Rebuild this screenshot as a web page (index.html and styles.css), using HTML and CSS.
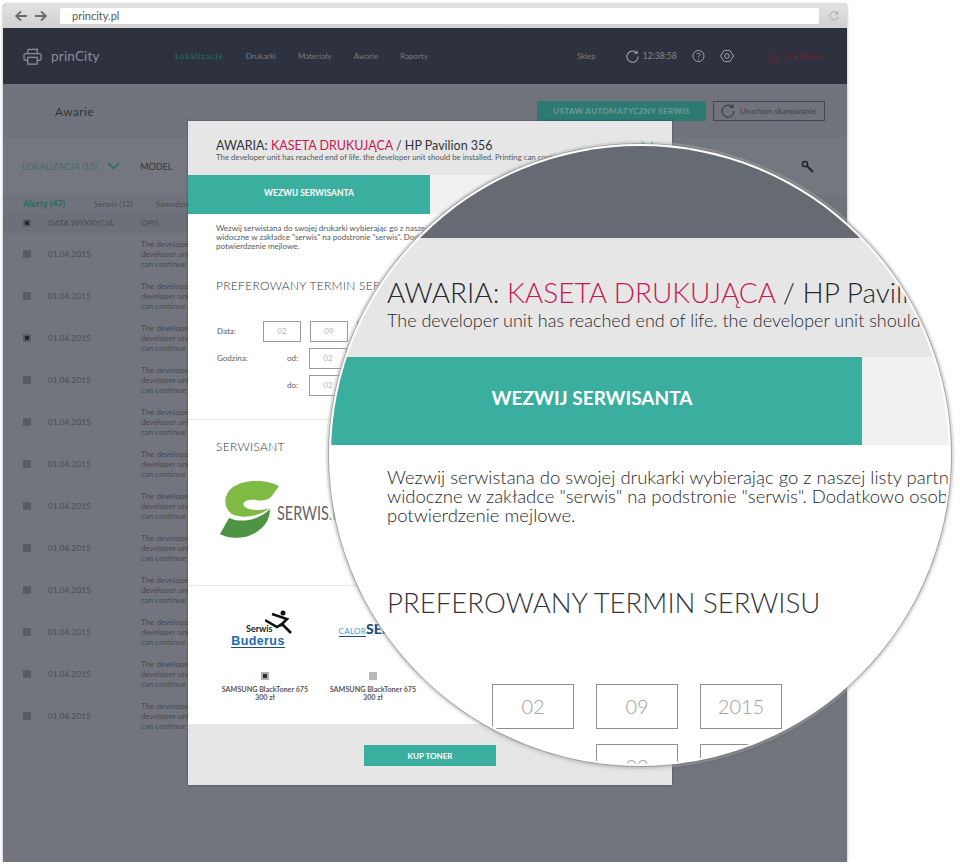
FILE: index.html
```html
<!DOCTYPE html>
<html lang="pl">
<head>
    <meta charset="UTF-8">
    <title>princity.pl</title>
    <link rel="stylesheet" href="styles.css">
</head>
<body>

    <div class="window">
        <div class="toolbar">
            <svg class="arrows" width="32" height="12" viewBox="0 0 32 12"><path d="M1 6h11M6 1.500L1 6l5 4.500M20 6h11M26 1.500L31 6l-5 4.500" fill="none" stroke="#6b6b6b" stroke-width="1.800"/></svg>
            <div class="address">princity.pl</div>
            <svg class="reload" width="12" height="12" viewBox="0 0 12 12"><path d="M9.500 3.500A4.200 4.200 0 1 0 10 7M9.800 1v3H7" fill="none" stroke="#aaa" stroke-width="1"/></svg>
        </div>

        <div class="navbar">
            <div class="brand">
                <svg width="19" height="19" viewBox="0 0 20 20" fill="none" stroke="#8b8e96" stroke-width="1.300"><path d="M5 7V3l2-1 2 1 2-1 2 1 2-1v5M5 14H3a2 2 0 0 1-2-2V9a2 2 0 0 1 2-2h14a2 2 0 0 1 2 2v3a2 2 0 0 1-2 2h-2M5 11h10v7H5z"/></svg>
                <span>prinCity</span>
            </div>
            <div class="menu">
                <span class="menu-active">Lokalizacje</span>
                <span>Drukarki</span>
                <span>Materiały</span>
                <span>Awarie</span>
                <span>Raporty</span>
            </div>
            <div class="nav-right">
                <span class="shop">Sklep</span>
                <svg width="13" height="13" viewBox="0 0 14 14" fill="none" stroke="#a5a8ae" stroke-width="1.100"><path d="M11.500 3.200A6 6 0 1 0 13 7M12 .5v3H9"/></svg>
                <span class="clock">12:38:58</span>
                <svg class="help" width="13" height="14" viewBox="0 0 14 14" fill="none" stroke="#a5a8ae" stroke-width="1"><circle cx="7" cy="7" r="6"/><path d="M5.200 5.200C5.500 3.400 8.800 3.500 8.800 5.300 8.800 6.800 7 6.800 7 8.500M7 10v1"/></svg>
                <svg class="gear" width="14" height="14" viewBox="0 0 15 14" fill="none" stroke="#a5a8ae" stroke-width="1"><path d="M4.500 1h6l4 6-4 6h-6l-4-6z"/><circle cx="7.500" cy="7" r="2.500"/></svg>
                <svg class="warn" width="14" height="13" viewBox="0 0 14 13" fill="none" stroke="#6f2235" stroke-width="1"><path d="M7 1l6 11H1z"/></svg>
                <span class="alerts">23 Alerty</span>
            </div>
        </div>

        <div class="subheader">
            <h2>Awarie</h2>
            <button class="btn-auto">USTAW AUTOMATYCZNY SERWIS</button>
            <button class="btn-scan">
                <svg width="14" height="14" viewBox="0 0 14 14" fill="none" stroke="#34373f" stroke-width="1.100"><path d="M11.500 3.200A6 6 0 1 0 13 7M12 .5v3H9"/></svg>
                Uruchom skanowanie
            </button>
        </div>

        <div class="filters">
            <span class="filter-active">LOKALIZACJA (15)</span>
            <svg width="13" height="8" viewBox="0 0 13 8"><path d="M1 1l5.500 5.500L12 1" fill="none" stroke="#1d6d62" stroke-width="1.500"/></svg>
            <span class="filter-model">MODEL</span>
            <svg class="search" width="13" height="13" viewBox="0 0 13 13" fill="none" stroke="#24262c"><circle cx="4" cy="4" r="2.600" stroke-width="1.500"/><path d="M6 6l6 6" stroke-width="2"/></svg>
        </div>

        <div class="tabs">
            <span class="tab-active">Alerty (47)</span>
            <span>Serwis (12)</span>
            <span>Samodzielne</span>
        </div>

        <div class="table-head">
            <i class="check checked"></i>
            <span class="col-date">DATA WYKRYCIA</span>
            <span>OPIS</span>
        </div>

        <div class="row"><i class="check"></i><span class="col-date">01.04.2015</span><p>The developer unit has reached<br>developer unit should be<br>can continue</p><b class="row-mark"></b></div>
        <div class="row"><i class="check"></i><span class="col-date">01.04.2015</span><p>The developer unit has reached<br>developer unit should be<br>can continue</p><b class="row-mark"></b></div>
        <div class="row"><i class="check checked"></i><span class="col-date">01.04.2015</span><p>The developer unit has reached<br>developer unit should be<br>can continue</p><b class="row-mark"></b></div>
        <div class="row"><i class="check"></i><span class="col-date">01.04.2015</span><p>The developer unit has reached<br>developer unit should be<br>can continue</p><b class="row-mark"></b></div>
        <div class="row"><i class="check"></i><span class="col-date">01.04.2015</span><p>The developer unit has reached<br>developer unit should be<br>can continue</p><b class="row-mark"></b></div>
        <div class="row"><i class="check"></i><span class="col-date">01.04.2015</span><p>The developer unit has reached<br>developer unit should be<br>can continue</p><b class="row-mark"></b></div>
        <div class="row"><i class="check"></i><span class="col-date">01.04.2015</span><p>The developer unit has reached<br>developer unit should be<br>can continue</p><b class="row-mark"></b></div>
        <div class="row"><i class="check"></i><span class="col-date">01.04.2015</span><p>The developer unit has reached<br>developer unit should be<br>can continue</p><b class="row-mark"></b></div>
        <div class="row"><i class="check"></i><span class="col-date">01.04.2015</span><p>The developer unit has reached<br>developer unit should be<br>can continue</p><b class="row-mark"></b></div>
        <div class="row"><i class="check"></i><span class="col-date">01.04.2015</span><p>The developer unit has reached<br>developer unit should be<br>can continue</p><b class="row-mark"></b></div>
        <div class="row"><i class="check"></i><span class="col-date">01.04.2015</span><p>The developer unit has reached<br>developer unit should be<br>can continue</p><b class="row-mark"></b></div>
        <div class="row"><i class="check"></i><span class="col-date">01.04.2015</span><p>The developer unit has reached<br>developer unit should be<br>can continue</p><b class="row-mark"></b></div>
    </div>

    <!-- popup over the dimmed page -->
    <div class="modal">
        <div class="modal-head">
            <h3>AWARIA: <em>KASETA DRUKUJĄCA</em> / HP Pavilion 356</h3>
            <p>The developer unit has reached end of life. the developer unit should be installed. Printing can continue</p>
            <svg class="modal-chevron" width="13" height="8" viewBox="0 0 13 8"><path d="M1 1l5.500 5.500L12 1" fill="none" stroke="#38ae9e" stroke-width="1.200"/></svg>
        </div>
        <div class="modal-tabs"><div class="modal-tab">WEZWIJ SERWISANTA</div></div>
        <p class="modal-text">Wezwij serwistana do swojej drukarki wybierając go z naszej listy partnerów<br>widoczne w zakładce "serwis" na podstronie "serwis". Dodatkowo osoba<br>potwierdzenie mejlowe.</p>
        <h4 class="modal-title">PREFEROWANY TERMIN SERWISU</h4>
        <div class="form">
            <div class="form-row"><label class="lbl">Data:</label><span class="lbl-sub"></span><span class="field">02</span><span class="field">09</span><span class="field">2015</span></div>
            <div class="form-row"><label class="lbl">Godzina:</label><span class="lbl-sub">od:</span><span class="field">02</span><span class="field">00</span></div>
            <div class="form-row"><label class="lbl"></label><span class="lbl-sub">do:</span><span class="field">02</span><span class="field">00</span></div>
        </div>
        <div class="section">
            <h4 class="modal-title">SERWISANT</h4>
            <div class="serwis-logo">
                <svg width="60" height="58" viewBox="0 0 60 58"><path d="M59 5C45-2 25-2 13 6 3 13 3 27 12 33c10 5 26 3 38-6-8 3-22 3-26-2-3-5 6-7 12-6 6 1 11 1 16-4z" fill="#7fba45"/><path d="M50 28c0 14-10 24-25 28-10 2-20 0-25-3l9-16c11 5 29 3 41-9z" fill="#4f9443"/></svg>
                <span>SERWIS<em>.PL</em></span>
            </div>
        </div>
        <div class="section parts">
            <div class="part">
                <div class="buderus">
                    <div class="buderus-top">
                        <span>Serwis</span>
                        <svg width="27" height="24" viewBox="0 0 27 24"><circle cx="18" cy="3" r="2.500" fill="#111"/><path d="M7 4l15 5-7 7M0 10l12 7 5-3 9 9" fill="none" stroke="#111" stroke-width="2.600"/></svg>
                    </div>
                    <div class="buderus-name">Buderus</div>
                </div>
                <i class="check-part checked"></i>
                <div class="part-name">SAMSUNG BlackToner 675<br>300 zł</div>
            </div>
            <div class="part">
                <div class="calor"><small>CALOR</small>SERWIS</div>
                <i class="check-part"></i>
                <div class="part-name">SAMSUNG BlackToner 675<br>300 zł</div>
            </div>
            <div class="part">
                <div class="calor"></div>
                <i class="check-part"></i>
                <div class="part-name">SAMSUNG BlackToner 675<br>300 zł</div>
            </div>
        </div>
        <div class="modal-foot"><button class="btn-buy">KUP TONER</button></div>
    </div>

    <!-- magnifying glass -->
    <div class="lens">
        <div class="lens-top"></div>
        <div class="lens-head">
            <h3>AWARIA: <em>KASETA DRUKUJĄCA</em> / HP Pavilion 356</h3>
            <p>The developer unit has reached end of life. the developer unit should be installed</p>
        </div>
        <div class="lens-tabs"><div class="lens-tab">WEZWIJ SERWISANTA</div></div>
        <p class="lens-text">Wezwij serwistana do swojej drukarki wybierając go z naszej listy partnerów<br>widoczne w zakładce "serwis" na podstronie "serwis". Dodatkowo osoba<br>potwierdzenie mejlowe.</p>
        <h4 class="lens-title">PREFEROWANY TERMIN SERWISU</h4>
        <div class="lens-row"><span class="lens-field">02</span><span class="lens-field">09</span><span class="lens-field">2015</span></div>
        <div class="lens-row lens-row-second"><span class="lens-field lens-field-empty"></span><span class="lens-field">02</span><span class="lens-field">00</span></div>
    </div>

</body>
</html>
```

FILE: styles.css
```css
body {
    margin: 0;
    background-color: #fff;
    font-family: Lato, "Open Sans", sans-serif;
    color: #3a3c42;
}

h2, h3, h4, p {
    margin: 0;
    font-weight: 400;
}

em {
    font-style: normal;
}

button {
    font-family: inherit;
    border: none;
    padding: 0;
}

/* browser window */
.window {
    width: 844px;
    height: 858px;
    margin: 4px 0 0 3px;
    overflow: hidden;
    background-color: #72757d;
    border-radius: 4px 4px 0 0;
    box-shadow: 0 0 3px rgba(0, 0, 0, 0.35);
}

.toolbar {
    height: 24px;
    display: flex;
    align-items: center;
    background: linear-gradient(#e2e2e2, #d0d0d0);
    padding: 0 7px 0 12px;
    box-sizing: border-box;
}

.address {
    flex: 1;
    height: 16px;
    line-height: 15px;
    margin: 0 9px 0 13px;
    padding-left: 12px;
    background-color: #fff;
    font-size: 11px;
    color: #555;
    border-radius: 2px;
}

.navbar {
    height: 56px;
    display: flex;
    align-items: center;
    background-color: #2e323e;
    color: #777a82;
    padding: 0 22px 0 20px;
    font-size: 8px;
}

.brand {
    width: 152px;
    display: flex;
    align-items: center;
    gap: 9px;
    font-size: 13.500px;
    letter-spacing: 0.2px;
    color: #8b8e96;
}

.menu {
    display: flex;
    gap: 22px;
}

.menu-active {
    color: #1c6b61;
    font-weight: 700;
    letter-spacing: 0.9px;
}

.nav-right {
    margin-left: auto;
    display: flex;
    align-items: center;
}

.shop {
    margin-right: 30px;
}

.clock {
    margin-left: 4px;
    font-size: 8.500px;
    color: #85888f;
}

.help {
    margin-left: 15px;
}

.gear {
    margin-left: 15px;
}

.warn {
    margin-left: 33px;
}

.alerts {
    margin-left: 6px;
    font-weight: 700;
    letter-spacing: 0.6px;
    color: #6f2235;
}

.subheader {
    height: 54px;
    display: flex;
    align-items: center;
    padding: 0 22px 0 52px;
    background-color: #70737b;
    box-sizing: border-box;
}

.subheader h2 {
    font-size: 12px;
    letter-spacing: 0.4px;
    color: #33353b;
    margin-right: auto;
}

.btn-auto {
    width: 169px;
    height: 20px;
    margin-right: 7px;
    background-color: #2c7a72;
    color: #6f9a96;
    font-size: 8px;
    font-weight: 700;
    letter-spacing: 0.4px;
}

.btn-scan {
    width: 112px;
    height: 20px;
    box-sizing: border-box;
    display: flex;
    align-items: center;
    gap: 5px;
    padding-left: 7px;
    background: none;
    border: 1px solid #43464d;
    color: #3e4148;
    font-size: 8px;
}

.filters {
    height: 56px;
    display: flex;
    align-items: center;
    padding: 0 33px 0 19px;
    background-color: #74777f;
    box-sizing: border-box;
    font-size: 9px;
}

.filter-active {
    color: #3f6d69;
    margin-right: 10px;
}

.filter-model {
    margin-left: 20px;
    color: #34363c;
}

.search {
    margin-left: auto;
}

.tabs {
    height: 19px;
    display: flex;
    align-items: center;
    gap: 23px;
    padding-left: 20px;
    background-color: #70737b;
    font-size: 8px;
    color: #494c53;
}

.tab-active {
    margin-right: 6px;
    color: #1d6d62;
    font-size: 9px;
    font-weight: 700;
}

.table-head, .row {
    display: flex;
    align-items: center;
    padding-left: 20px;
    font-size: 8px;
    color: #474a51;
}

.table-head {
    height: 20px;
    background-color: #6d7078;
}

.row {
    height: 42px;
}

.row p {
    line-height: 10px;
    font-size: 8px;
}

.col-date {
    width: 93px;
    letter-spacing: 0.2px;
}

.check {
    width: 8px;
    height: 8px;
    margin-right: 17px;
    background-color: #595c63;
}

.check.checked {
    box-shadow: inset 0 0 0 2px #595c63, inset 0 0 0 4px #24262c;
}

.row-mark {
    width: 5px;
    height: 3px;
    margin: 0 41px 0 auto;
    border: solid #76304a;
    border-width: 0 0 1px 1px;
    border-radius: 0 0 3px 3px;
}

/* popup */
.modal {
    position: absolute;
    left: 188px;
    top: 121px;
    width: 484px;
    height: 664px;
    display: flex;
    flex-direction: column;
    background-color: #fff;
    box-shadow: 0 0 2px rgba(0, 0, 0, 0.4);
    overflow: hidden;
}

.modal-head {
    height: 54px;
    box-sizing: border-box;
    padding: 17px 0 0 28px;
    background-color: #e6e6e6;
    position: relative;
    white-space: nowrap;
}

.modal-head h3 {
    font-size: 12.500px;
    line-height: 15px;
    color: #33353a;
}

.modal-head h3 em, .lens-head h3 em {
    color: #c8184f;
}

.modal-head p {
    font-size: 7.800px;
    line-height: 9px;
    color: #55575c;
}

.modal-chevron {
    position: absolute;
    right: 18px;
    top: 20px;
}

.modal-tabs {
    height: 39px;
    background-color: #f1f1f1;
}

.modal-tab {
    width: 242px;
    height: 39px;
    line-height: 37px;
    text-align: center;
    background-color: #3aaf9f;
    color: #fff;
    font-size: 8.500px;
    font-weight: 700;
}

.modal-text {
    margin: 10px 0 0 28px;
    font-size: 8px;
    line-height: 9.200px;
    color: #55575c;
    white-space: nowrap;
}

.modal-title {
    font-size: 12px;
    line-height: 14px;
    font-weight: 300;
    color: #33353a;
    letter-spacing: 0.3px;
    white-space: nowrap;
}

.modal-text + .modal-title {
    margin: 27px 0 0 28px;
}

.form {
    margin: 28px 0 0 29px;
    display: flex;
    flex-direction: column;
    gap: 6px;
}

.form-row {
    display: flex;
    align-items: center;
    gap: 9px;
    font-size: 8px;
    color: #5a5c61;
}

.lbl {
    width: 46px;
    margin-right: -9px;
}

.lbl-sub {
    width: 46px;
    margin-right: -9px;
    padding-left: 24px;
    box-sizing: border-box;
}

.lbl-sub:empty {
    width: 0;
    padding: 0;
    margin: 0 0 0 -9px;
}

.field {
    width: 38px;
    height: 21px;
    box-sizing: border-box;
    line-height: 19px;
    text-align: center;
    border: 1px solid #9b9b9b;
    color: #b5b5b5;
}

.section {
    margin-top: 23px;
    padding: 20px 0 0 28px;
    border-top: 1px solid #e8e8e8;
}

.serwis-logo {
    display: flex;
    align-items: center;
    margin: 27px 0 0 4px;
    font-size: 20px;
    color: #5f6166;
}

.serwis-logo span {
    transform: scaleX(0.72);
    transform-origin: left;
    margin: 4px 0 0 -3px;
}

.serwis-logo em {
    color: #7fba45;
}

.section.parts {
    display: flex;
    gap: 16px;
    margin-top: 46px;
    padding: 0 0 0 31px;
    height: 138px;
}

.part {
    width: 92px;
    flex-shrink: 0;
    display: flex;
    flex-direction: column;
    align-items: center;
}

.buderus {
    width: 54px;
    height: 85px;
    padding-top: 24px;
    box-sizing: border-box;
    margin-right: 14px;
}

.buderus-top {
    display: flex;
    align-items: flex-end;
    height: 24px;
    padding-left: 15px;
    font-size: 9px;
    line-height: 11px;
    font-weight: 700;
    color: #222;
    white-space: nowrap;
}

.buderus-top svg {
    margin-left: -8px;
    flex-shrink: 0;
}

.buderus-name {
    margin-top: 2px;
    font-family: "Liberation Sans", sans-serif;
    font-size: 12.500px;
    line-height: 11px;
    font-weight: 700;
    letter-spacing: 0.4px;
    color: #1d6bb0;
    border-bottom: 1px solid #1d4f86;
    text-align: center;
}

.calor {
    height: 85px;
    padding: 36px 0 0 10px;
    box-sizing: border-box;
    font-size: 14px;
    line-height: 14px;
    font-weight: 900;
    color: #1a4f7c;
    white-space: nowrap;
}

.calor small {
    font-size: 8px;
    font-weight: 400;
    letter-spacing: 0.3px;
    color: #3b9bd6;
    border-bottom: 1px solid #1a4f7c;
}

.check-part {
    width: 8px;
    height: 8px;
    margin-top: 1px;
    background-color: #b9b9b9;
}

.check-part.checked {
    background-color: #2b2d33;
    border: 2px solid #b0b0b0;
    box-sizing: content-box;
    width: 4px;
    height: 4px;
}

.part-name {
    margin-top: 6px;
    font-size: 7.200px;
    line-height: 8.500px;
    font-weight: 700;
    text-align: center;
    color: #55575c;
    white-space: nowrap;
}

.modal-foot {
    margin-top: auto;
    height: 61px;
    flex-shrink: 0;
    padding: 21px 0 0 176px;
    box-sizing: border-box;
    background-color: #e6e6e6;
}

.btn-buy {
    display: block;
    width: 132px;
    height: 21px;
    background-color: #3aaf9f;
    color: #fff;
    font-size: 8px;
    font-weight: 700;
}

/* magnifying glass */
.lens {
    position: absolute;
    left: 329px;
    top: 144px;
    width: 622px;
    height: 622px;
    box-sizing: border-box;
    border: 2px solid #fff;
    border-radius: 50%;
    overflow: hidden;
    background-color: #fff;
    box-shadow: 0 0 0 1px rgba(120, 120, 120, 0.55), 0 0 0 3px rgba(190, 190, 190, 0.35), 0 1px 6px rgba(0, 0, 0, 0.2);
    white-space: nowrap;
}

.lens-top {
    height: 92px;
    background-color: #666a72;
}

.lens-head {
    height: 119px;
    box-sizing: border-box;
    padding: 36px 0 0 56px;
    background-color: #e6e6e6;
}

.lens-head h3 {
    font-size: 28px;
    line-height: 36px;
    font-weight: 300;
    color: #26282d;
}

.lens-head p {
    font-size: 18px;
    line-height: 20px;
    font-weight: 300;
    color: #26282d;
}

.lens-tabs {
    height: 88px;
    background-color: #f1f1f1;
}

.lens-tab {
    width: 531px;
    height: 88px;
    box-sizing: border-box;
    padding-right: 9px;
    line-height: 82px;
    text-align: center;
    background-color: #3aaf9f;
    color: #fff;
    font-size: 19px;
    font-weight: 700;
}

.lens-text {
    margin: 23px 0 0 56px;
    font-size: 18.500px;
    line-height: 19px;
    font-weight: 300;
    color: #26282d;
}

.lens-title {
    margin: 60px 0 0 56px;
    font-size: 27.600px;
    line-height: 36px;
    font-weight: 300;
    color: #33353a;
}

.lens-row {
    display: flex;
    gap: 22px;
    margin: 63px 0 0 161px;
}

.lens-row-second {
    margin-top: 15px;
}

.lens-field {
    width: 82px;
    height: 45px;
    box-sizing: border-box;
    line-height: 43px;
    text-align: center;
    border: 1px solid #8f8f8f;
    font-size: 20px;
    font-weight: 300;
    color: #a0a0a0;
}

.lens-field-empty {
    border-color: transparent;
}
```
